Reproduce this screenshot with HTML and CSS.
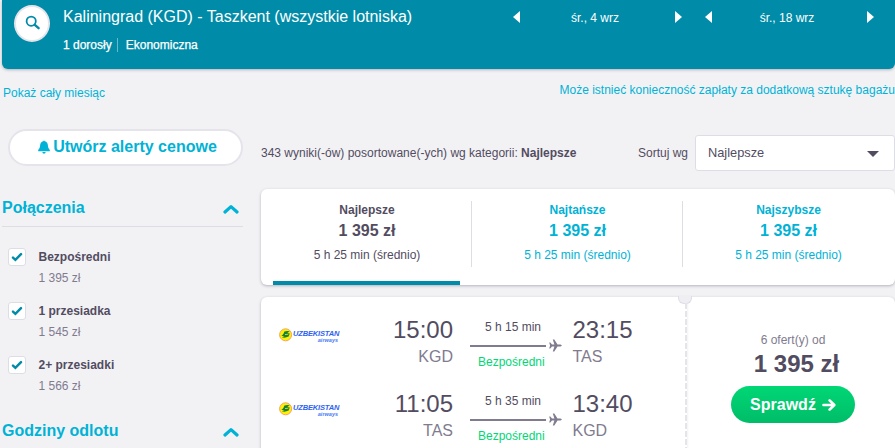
FILE: index.html
```html
<!DOCTYPE html>
<html lang="pl">
<head>
  <meta charset="UTF-8" />
  <meta name="viewport" content="width=device-width, initial-scale=1.0"/>
  <title>Kaliningrad (KGD) - Taszkent</title>
  <link rel="stylesheet" href="styles.css">
</head>
<body>

  <svg class="defs" width="0" height="0">
    <symbol id="check" viewBox="0 0 12 10">
      <path d="M2 5.6 L4.4 7.8 L10 2.2" fill="none" stroke="#008ca8" stroke-width="2.5" stroke-linecap="round"/>
    </symbol>
    <symbol id="chevron" viewBox="0 0 16 10">
      <path d="M2 8 L8 2.6 L14 8" fill="none" stroke="#00b2d6" stroke-width="3.2" stroke-linecap="round" stroke-linejoin="round"/>
    </symbol>
    <symbol id="plane" viewBox="0 0 13 13">
      <path d="M0.2 3.4 H1.3 L3 5.5 H5.4 L3.8 0.4 H5.3 L8.5 5.5 H11.4 Q12.8 5.8 12.8 6.5 Q12.8 7.2 11.4 7.5 H8.5 L5.3 12.6 H3.8 L5.4 7.5 H3 L1.3 9.6 H0.2 L1.1 6.5 Z" fill="#817b8f"/>
    </symbol>
    <symbol id="bird" viewBox="0 0 14 16">
      <circle cx="6.6" cy="7.8" r="6" fill="#fff000" stroke="#f6a45c" stroke-width="1"/>
      <path d="M2.4 9 Q5 7 5.4 4.6 Q8 3.4 10.8 4.2 L8.3 6 L10.8 6.4 L9.6 9.6 Q6 11.4 2.8 10.3 L5.6 9 Z" fill="#14803c"/>
      <path d="M6 7.6 L9.4 7.2" stroke="#fff000" stroke-width="0.8"/>
    </symbol>
  </svg>

  <header class="topbar">
    <button class="search" aria-label="Szukaj">
      <svg width="16" height="16" viewBox="0 0 16 16">
        <circle cx="6.2" cy="6.2" r="4.6" fill="none" stroke="#008ca8" stroke-width="1.8"/>
        <path d="M9.8 9.8 L13.6 13.2" stroke="#008ca8" stroke-width="2.4" stroke-linecap="round"/>
      </svg>
    </button>
    <div class="route">
      <h1>Kaliningrad (KGD) - Taszkent (wszystkie lotniska)</h1>
      <p><span class="pax">1 dorosły</span><span class="cabin">Ekonomiczna</span></p>
    </div>
    <div class="dates">
      <div class="date">
        <i class="arrow left"></i><span>śr., 4 wrz</span><i class="arrow right"></i>
      </div>
      <div class="date second">
        <i class="arrow left"></i><span>śr., 18 wrz</span><i class="arrow right"></i>
      </div>
    </div>
  </header>

  <div class="links">
    <a class="month">Pokaż cały miesiąc</a>
    <a class="baggage">Może istnieć konieczność zapłaty za dodatkową sztukę bagażu</a>
  </div>

  <div class="content">
    <aside class="sidebar">
      <button class="alerts">
        <svg width="12" height="14" viewBox="0 0 12 14">
          <path d="M5.2 1.2 Q6 -0.2 6.8 1.2 Q9.8 2 9.9 5.4 Q10 8.4 11.8 10 V11.2 H0.2 V10 Q2 8.4 2.1 5.4 Q2.2 2 5.2 1.2 Z M4.2 12 H7.8 Q7.2 13.7 6 13.7 Q4.8 13.7 4.2 12 Z" fill="#00b2d6"/>
        </svg>
        <span>Utwórz alerty cenowe</span>
      </button>

      <div class="filter-title">
        <h2>Połączenia</h2>
        <svg width="16" height="10"><use href="#chevron"/></svg>
      </div>
      <ul class="filters">
        <li>
          <span class="checkbox"><svg width="12" height="10"><use href="#check"/></svg></span>
          <div><b>Bezpośredni</b><small>1 395 zł</small></div>
        </li>
        <li>
          <span class="checkbox"><svg width="12" height="10"><use href="#check"/></svg></span>
          <div><b>1 przesiadka</b><small>1 545 zł</small></div>
        </li>
        <li>
          <span class="checkbox"><svg width="12" height="10"><use href="#check"/></svg></span>
          <div><b>2+ przesiadki</b><small>1 566 zł</small></div>
        </li>
      </ul>
      <div class="filter-title">
        <h2>Godziny odlotu</h2>
        <svg width="16" height="10"><use href="#chevron"/></svg>
      </div>
    </aside>

    <main class="results">
      <div class="summary">
        <p class="count">343 wyniki(-ów) posortowane(-ych) wg kategorii: <b>Najlepsze</b></p>
        <span class="sort-label">Sortuj wg</span>
        <div class="select"><span>Najlepsze</span><i class="caret"></i></div>
      </div>

      <div class="tabs card">
        <div class="tab active"><b>Najlepsze</b><strong>1 395 zł</strong><span>5 h 25 min (średnio)</span></div>
        <div class="tab"><b>Najtańsze</b><strong>1 395 zł</strong><span>5 h 25 min (średnio)</span></div>
        <div class="tab"><b>Najszybsze</b><strong>1 395 zł</strong><span>5 h 25 min (średnio)</span></div>
      </div>

      <div class="ticket">
        <div class="legs card">
          <div class="leg">
            <div class="logo">
              <svg width="14" height="16"><use href="#bird"/></svg>
              <div><b>UZBEKISTAN</b><i>airways</i></div>
            </div>
            <div class="stop from"><b>15:00</b><span>KGD</span></div>
            <div class="path">
              <span class="duration">5 h 15 min</span>
              <div class="line"><i></i><svg width="13" height="13"><use href="#plane"/></svg></div>
              <span class="direct">Bezpośredni</span>
            </div>
            <div class="stop to"><b>23:15</b><span>TAS</span></div>
          </div>
          <div class="leg">
            <div class="logo">
              <svg width="14" height="16"><use href="#bird"/></svg>
              <div><b>UZBEKISTAN</b><i>airways</i></div>
            </div>
            <div class="stop from"><b>11:05</b><span>TAS</span></div>
            <div class="path">
              <span class="duration">5 h 35 min</span>
              <div class="line"><i></i><svg width="13" height="13"><use href="#plane"/></svg></div>
              <span class="direct">Bezpośredni</span>
            </div>
            <div class="stop to"><b>13:40</b><span>KGD</span></div>
          </div>
        </div>
        <div class="offer card">
          <span class="deals">6 ofert(y) od</span>
          <strong>1 395 zł</strong>
          <button class="check-btn">
            <span>Sprawdź</span>
            <svg width="14" height="14" viewBox="0 0 14 14">
              <path d="M1.5 7 H12 M7.6 2.3 L12.3 7 L7.6 11.7" fill="none" stroke="#fff" stroke-width="2.6" stroke-linecap="round" stroke-linejoin="round"/>
            </svg>
          </button>
        </div>
      </div>
    </main>
  </div>

</body>
</html>
```

FILE: styles.css
```css
* {
  box-sizing: border-box;
  margin: 0;
  padding: 0;
}
body {
  font-family: "Liberation Sans", Arial, sans-serif;
  font-size: 12px;
  line-height: 18px;
  color: #524c61;
  background: #f2f2f5;
  width: 895px;
  height: 448px;
  overflow: hidden;
}
button {
  font-family: inherit;
  border: none;
}
svg { display: block; flex: none; }
.defs { position: absolute; }
.card {
  background: white;
  border-radius: 6px;
  box-shadow: 0 1px 3px rgba(37,32,51,0.3);
}

/* header */
.topbar {
  display: flex;
  height: 69px;
  margin-left: 2px;
  padding-left: 12px;
  background: #008ca8;
  color: white;
  border-radius: 0 0 6px 6px;
  box-shadow: 0 1px 3px rgba(37,32,51,0.3);
}
.search {
  width: 36px;
  height: 37px;
  margin-top: 5px;
  padding: 0 0 1px 1px;
  border: 2px solid #e6e4eb;
  border-radius: 50%;
  background: white;
  display: flex;
  flex: none;
  align-items: center;
  justify-content: center;
}
.route {
  flex: none;
  width: 463px;
  padding: 6px 0 0 13px;
}
.route h1 {
  font-size: 16px;
  font-weight: normal;
  line-height: 22px;
  white-space: nowrap;
}
.route p {
  display: flex;
  margin-top: 10px;
  line-height: 14px;
  -webkit-text-stroke: 0.25px white;
}
.cabin {
  margin-left: 5px;
  padding-left: 8px;
  border-left: 1px solid #66bacb;
}
.dates {
  display: flex;
  height: 18px;
  margin-top: 9px;
}
.date {
  display: flex;
  align-items: center;
  justify-content: space-between;
  width: 169px;
}
.date span { margin-right: 5px; }
.date.second { margin-left: 23px; }
.arrow {
  border: 6px solid transparent;
  margin-top: -2px;
}
.arrow.left { border-right: 7px solid white; border-left: none; }
.arrow.right { border-left: 7px solid white; border-right: none; }

.links {
  display: flex;
  justify-content: space-between;
  height: 60px;
  padding: 12px 0 0 3px;
  color: #00b2d6;
}
.month { padding-top: 3px; }

.content { display: flex; }

/* filters */
.sidebar {
  width: 241px;
  margin-left: 2px;
}
.alerts {
  display: flex;
  align-items: center;
  justify-content: center;
  gap: 3px;
  width: 235px;
  height: 37px;
  margin: 0 0 24px 6px;
  padding: 0 0 2px 4px;
  border: 2px solid #e6e4eb;
  border-radius: 19px;
  background: white;
  color: #00b2d6;
  font-size: 16px;
  font-weight: bold;
}
.filter-title {
  display: flex;
  align-items: center;
  justify-content: space-between;
  height: 37px;
  padding: 0 4px 1px 0;
  border-bottom: 1px solid #dddde5;
  color: #00b2d6;
}
.filter-title h2 {
  font-size: 16px;
  line-height: 20px;
}
.filter-title svg { margin-top: 3px; }
.filters {
  list-style: none;
  padding: 21px 0 0 6px;
  height: 186px;
}
.filters li {
  display: flex;
  height: 54px;
}
.checkbox {
  width: 18px;
  height: 18px;
  margin-right: 12.5px;
  border: 1px solid #dddde5;
  border-radius: 3px;
  background: white;
  display: flex;
  align-items: center;
  justify-content: center;
}
.filters b, .filters small {
  display: block;
  font-size: 12px;
  line-height: 21px;
}
.filters b { margin-top: -1px; }
.filters small { color: #817b8f; }

/* results */
.results {
  width: 634px;
  margin-left: 18px;
}
.summary {
  display: flex;
  align-items: center;
  height: 36px;
  margin: 6px 0 18px;
}
.count { flex: 1; }
.sort-label { margin-right: 7px; }
.select {
  display: flex;
  align-items: center;
  justify-content: space-between;
  width: 200px;
  height: 36px;
  padding: 0 15px 0 12px;
  border: 1px solid #dddde5;
  border-radius: 3px;
  background: white;
  font-size: 12.8px;
}
.caret {
  border: 6px solid transparent;
  border-top-color: #524c61;
  border-bottom: none;
  margin-top: 1px;
}
.tabs {
  display: flex;
  height: 96px;
  padding: 0 12px;
  color: #00b2d6;
}
.tab {
  display: flex;
  flex: none;
  flex-direction: column;
  align-items: center;
  width: 211px;
  height: 66px;
  margin-top: 12px;
  padding-left: 1px;
  border-left: 1px solid #dddde5;
}
.tab b { line-height: 18px; }
.tab strong { font-size: 16px; line-height: 24px; }
.tab span { line-height: 24px; }
.tab.active {
  width: 187px;
  height: 84px;
  margin-right: 11px;
  border-left: none;
  border-bottom: 4px solid #008ca8;
  color: #524c61;
}
.ticket {
  display: flex;
  margin-top: 12px;
}
.legs {
  position: relative;
  width: 425px;
  height: 170px;
  padding-top: 18px;
  border-radius: 6px 0 0 6px;
}
/* perforation between the flight and the price */
.legs::before {
  content: "";
  position: absolute;
  z-index: 1;
  top: -1px;
  right: -6px;
  width: 12px;
  height: 7px;
  border: 1px solid #dddde5;
  border-top: none;
  border-radius: 0 0 6px 6px;
  background: #efeff3;
}
.legs::after {
  content: "";
  position: absolute;
  z-index: 1;
  top: 6px;
  bottom: 0;
  right: -1px;
  width: 2px;
  background: repeating-linear-gradient(#e6e4eb 0 6px, white 6px 8px);
}
.leg {
  display: flex;
  height: 74px;
  padding-left: 18px;
}
.logo {
  display: flex;
  width: 60px;
  margin-top: 12px;
  font-style: italic;
}
.logo b, .logo i {
  display: block;
  font-weight: bold;
  text-align: right;
}
.logo div { width: 45px; }
.logo b {
  margin-top: 3px;
  font-size: 7.5px;
  line-height: 8px;
  letter-spacing: -0.15px;
  color: #2f62f0;
}
.logo i {
  font-size: 5.5px;
  line-height: 5px;
  color: #4a7bf5;
}
.stop b, .stop span { display: block; }
.stop b {
  font-size: 24px;
  font-weight: normal;
  line-height: 30px;
}
.stop span {
  font-size: 16px;
  line-height: 24px;
  color: #817b8f;
}
.from { width: 114px; text-align: right; }
.to { margin-left: 10.5px; }
.path {
  display: flex;
  flex-direction: column;
  width: 92px;
  margin-left: 17px;
  padding-top: 3px;
}
.duration { margin-left: 15px; }
.line {
  display: flex;
  align-items: center;
  height: 13px;
  margin: 3px 0 1px;
  gap: 3px;
}
.line i {
  width: 76px;
  height: 2px;
  background: #817b8f;
}
.direct {
  margin-left: 8px;
  color: #00d775;
}
.offer {
  display: flex;
  flex-direction: column;
  align-items: center;
  width: 209px;
  padding: 34px 0 0 9px;
  border-radius: 0 6px 6px 0;
}
.deals { color: #817b8f; margin-right: 4px; }
.offer strong {
  margin-left: 3px;
  font-size: 24px;
  line-height: 30px;
}
.check-btn {
  display: flex;
  align-items: center;
  justify-content: center;
  gap: 6px;
  width: 124px;
  height: 37px;
  margin-top: 7px;
  margin-right: 4px;
  border-radius: 19px;
  background: linear-gradient(#00d775, #00bd68);
  color: white;
  font-size: 16px;
  font-weight: bold;
}
```
